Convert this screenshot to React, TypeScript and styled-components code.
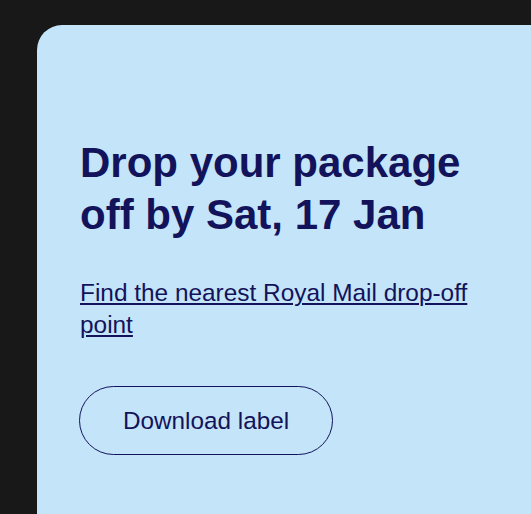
import styled, { createGlobalStyle } from "styled-components";

const GlobalStyle = createGlobalStyle`
  html, body {
    margin: 0;
    padding: 0;
    background-color: #181818;
    overflow: hidden;
  }
  body {
    font-family: "Liberation Sans", Arial, sans-serif;
  }
`;

const App = () => {
  return (
    <>
      <GlobalStyle />
      <Page>
        <Card>
          <Content>
            <Heading>Drop your package off by Sat, 17 Jan</Heading>
            <DropOffLink href="#">Find the nearest Royal Mail drop-off point</DropOffLink>
            <OutlineButton type="button">Download label</OutlineButton>
          </Content>
        </Card>
      </Page>
    </>
  );
};

export default App;

const Page = styled.div`
  width: 531px;
  height: 514px;
  padding: 25px 0 0 37px;
  box-sizing: border-box;
  overflow: hidden;
`;

const Card = styled.section`
  width: 560px;
  min-height: 520px;
  box-sizing: border-box;
  padding: 112px 0 40px 43px;
  background-color: #c4e4f9;
  border-radius: 25px 0 0 0;
`;

const Content = styled.div`
  max-width: 410px;
  display: flex;
  flex-direction: column;
  align-items: flex-start;
`;

const Heading = styled.h2`
  margin: 0 0 36px;
  font-size: 42px;
  line-height: 52px;
  font-weight: 700;
  color: #13135b;
`;

const DropOffLink = styled.a`
  display: block;
  margin: 0 0 45px;
  font-size: 24.4px;
  line-height: 32px;
  color: #13135b;
  text-decoration: underline;
  text-decoration-thickness: 1.5px;
  text-underline-offset: 2px;
`;

const OutlineButton = styled.button`
  height: 69px;
  padding: 0 43px;
  margin-left: -1px;
  font-family: "Liberation Sans", Arial, sans-serif;
  font-size: 24.3px;
  color: #13135b;
  background: transparent;
  border: 1px solid #13135b;
  border-radius: 35px;
  cursor: pointer;
`;
